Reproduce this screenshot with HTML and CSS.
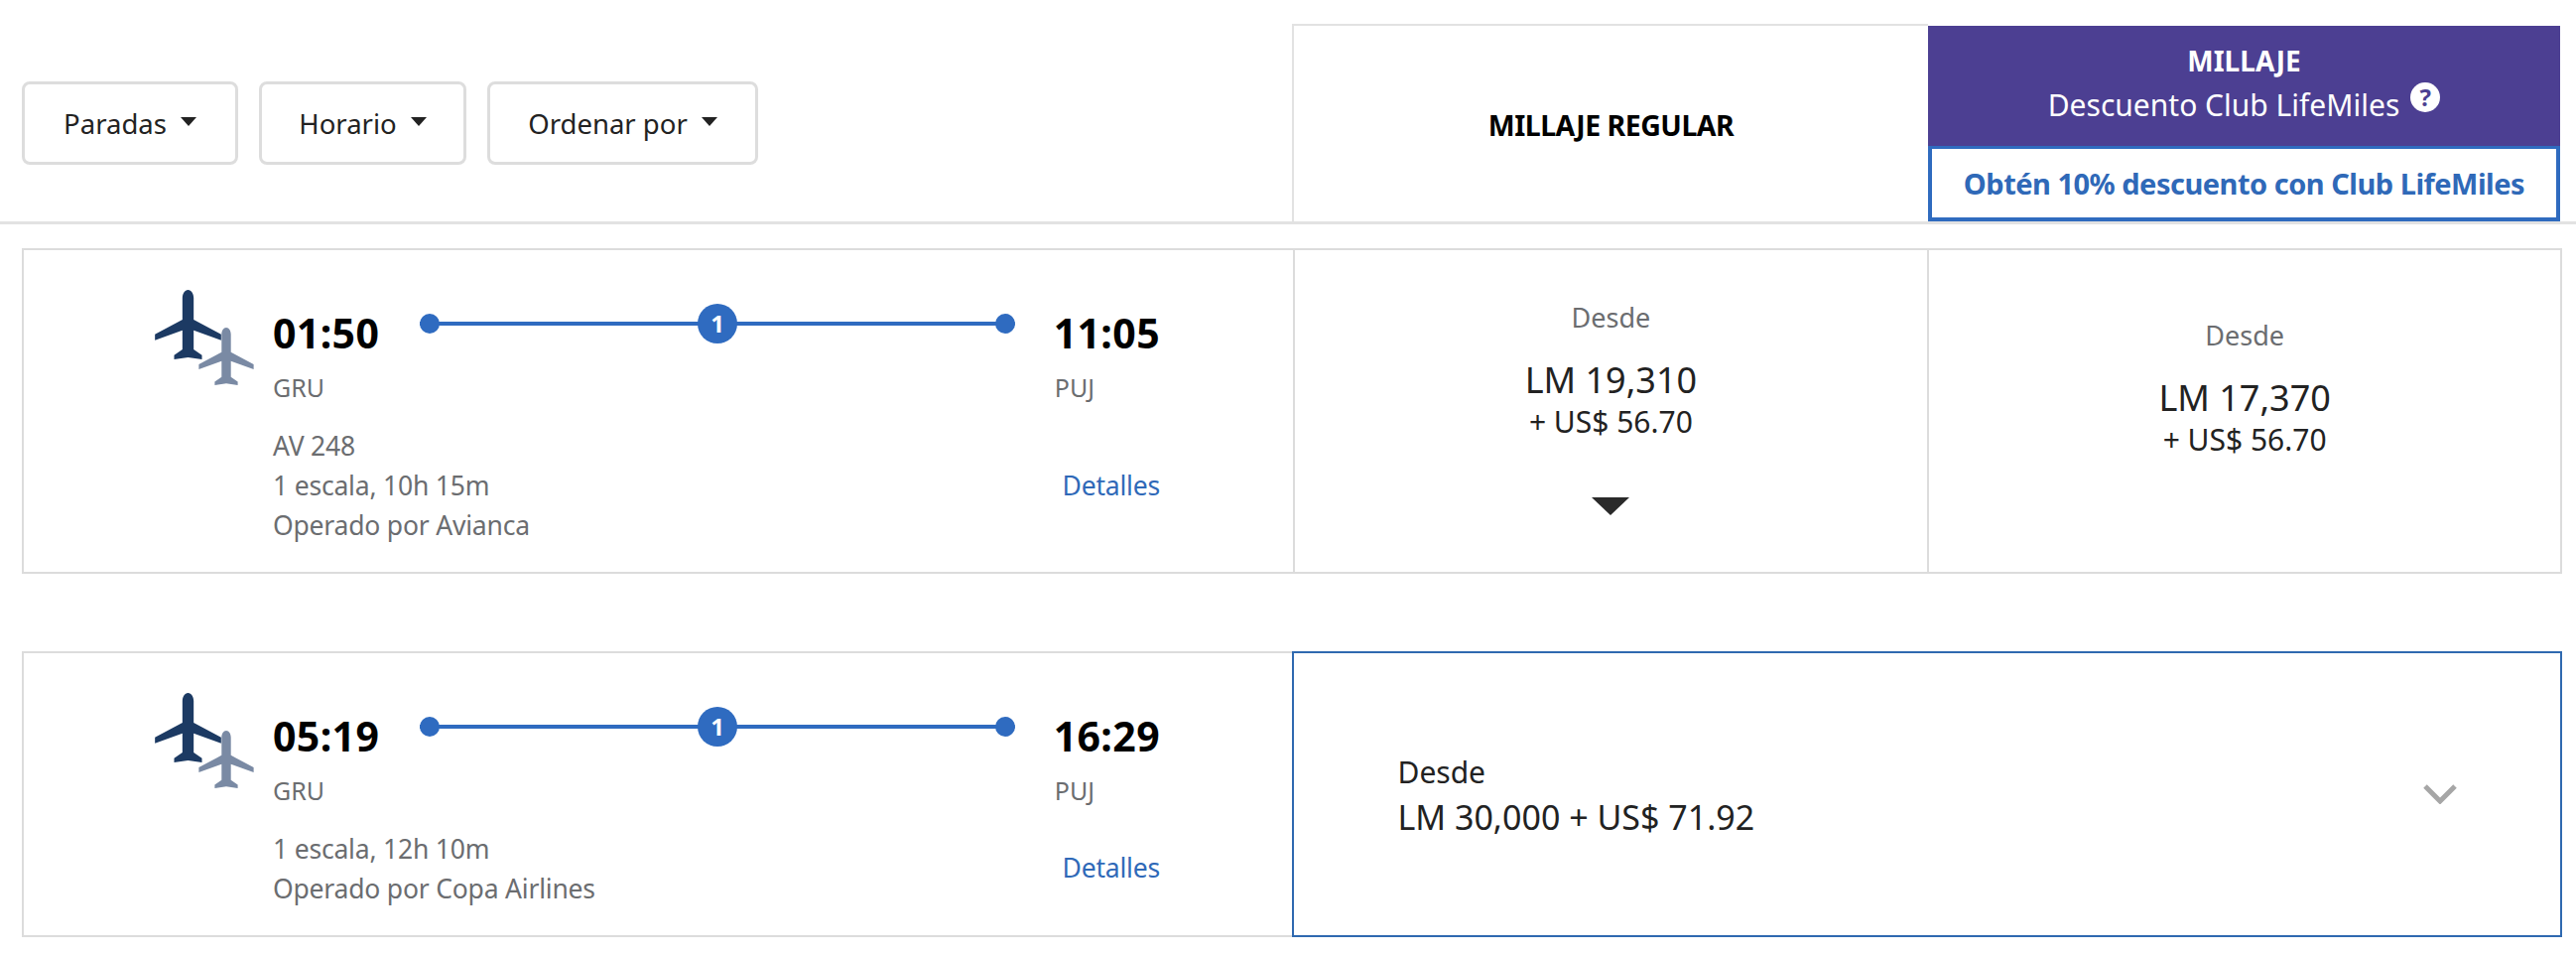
FILE: index.html
```html
<!DOCTYPE html>
<html lang="es">
<head>
<meta charset="utf-8">
<title>Vuelos</title>
<link rel="stylesheet" href="styles.css">
</head>
<body>
<svg class="defs" width="0" height="0" aria-hidden="true">
  <symbol id="plane" viewBox="0 0 200 210">
    <path d="M100 0C110 0 117 12 117 24V90L200 134V152L117 122V180L142 197V210L100 204L58 210V197L83 180V122L0 152V134L83 90V24C83 12 90 0 100 0Z"/>
  </symbol>
</svg>

<header class="top">
  <div class="filters">
    <button class="filter filter-a">Paradas<span class="caret"></span></button>
    <button class="filter filter-b">Horario<span class="caret"></span></button>
    <button class="filter filter-c">Ordenar por<span class="caret"></span></button>
  </div>
  <div class="head-regular">MILLAJE REGULAR</div>
  <div class="head-club">
    <div class="club-title">
      <strong>MILLAJE</strong>
      <span class="club-sub">Descuento Club LifeMiles<span class="help">?</span></span>
    </div>
    <div class="club-cta">Obtén 10% descuento con Club LifeMiles</div>
  </div>
</header>

<main>
  <article class="card card-one">
    <section class="flight">
      <div class="planes">
        <svg class="plane-main"><use href="#plane"/></svg>
        <svg class="plane-second"><use href="#plane"/></svg>
      </div>
      <div class="info">
        <div class="route">
          <span class="time">01:50</span>
          <div class="track"><i class="dot"></i><b class="stops">1</b><i class="dot"></i></div>
          <span class="time">11:05</span>
        </div>
        <div class="airports"><span>GRU</span><span class="dest">PUJ</span></div>
        <div class="meta">
          <div>
            <p>AV 248</p>
            <p>1 escala, 10h 15m</p>
            <p>Operado por Avianca</p>
          </div>
          <a class="details details-one">Detalles</a>
        </div>
      </div>
    </section>
    <section class="fare fare-regular">
      <span class="from">Desde</span>
      <span class="miles">LM 19,310</span>
      <span class="cash">+ US$ 56.70</span>
      <span class="fare-arrow"></span>
    </section>
    <section class="fare fare-club">
      <span class="from">Desde</span>
      <span class="miles">LM 17,370</span>
      <span class="cash">+ US$ 56.70</span>
    </section>
  </article>

  <article class="card card-two">
    <section class="flight">
      <div class="planes">
        <svg class="plane-main"><use href="#plane"/></svg>
        <svg class="plane-second"><use href="#plane"/></svg>
      </div>
      <div class="info">
        <div class="route">
          <span class="time">05:19</span>
          <div class="track"><i class="dot"></i><b class="stops">1</b><i class="dot"></i></div>
          <span class="time">16:29</span>
        </div>
        <div class="airports"><span>GRU</span><span class="dest">PUJ</span></div>
        <div class="meta">
          <div>
            <p>1 escala, 12h 10m</p>
            <p>Operado por Copa Airlines</p>
          </div>
          <a class="details details-two">Detalles</a>
        </div>
      </div>
    </section>
    <section class="fare-wide">
      <div>
        <div class="wide-from">Desde</div>
        <div class="wide-price">LM 30,000 + US$ 71.92</div>
      </div>
      <svg class="chevron" viewBox="0 0 34 20"><path d="M2 2L17 17L32 2"/></svg>
    </section>
  </article>
</main>
</body>
</html>
```

FILE: styles.css
```css
* { box-sizing: border-box; }
html, body { margin: 0; padding: 0; }
body {
  width: 2596px;
  height: 964px;
  background: #fff;
  color: #222;
  font-family: "Noto Sans", "Open Sans", sans-serif;
  overflow: hidden;
}
.defs { position: absolute; }
p { margin: 0; }

/* header */
.top {
  display: flex;
  height: 226px;
  padding-top: 24px;
  border-bottom: 3px solid #e2e2e2;
}
.filters {
  width: 1302px;
  display: flex;
  align-items: flex-start;
  gap: 21px;
  padding: 58px 0 0 22px;
}
.filter {
  height: 84px;
  display: flex;
  align-items: center;
  justify-content: center;
  background: #fff;
  border: 3px solid #ddd;
  border-radius: 8px;
  color: #222;
  font: 400 27.5px "Noto Sans", sans-serif;
  padding: 0;
}
.filter-a { width: 218px; }
.filter-b { width: 209px; }
.filter-c { width: 273px; }
.caret {
  width: 0;
  height: 0;
  margin: 0 0 3px 14px;
  border-left: 8px solid transparent;
  border-right: 8px solid transparent;
  border-top: 9px solid #222;
}
.head-regular {
  width: 641px;
  height: 199px;
  display: flex;
  align-items: center;
  justify-content: center;
  padding-top: 3px;
  border: solid #e2e2e2;
  border-width: 2px 0 0 2px;
  color: #000;
  font-size: 28.5px;
  font-weight: 700;
  letter-spacing: -0.5px;
}
.head-club {
  width: 637px;
  height: 197px;
  margin-top: 2px;
  display: flex;
  flex-direction: column;
}
.club-title {
  height: 121px;
  background: #4c3f92;
  color: #fff;
  display: flex;
  flex-direction: column;
  align-items: center;
  padding-top: 15px;
  font-size: 30px;
}
.club-title strong { font-size: 28px; line-height: 40px; }
.club-sub { margin-top: 2px; line-height: 46px; display: flex; align-items: flex-start; }
.help {
  width: 30px;
  height: 30px;
  margin: 0 0 0 11px;
  border-radius: 50%;
  background: #fff;
  color: #4c3f92;
  font-size: 24px;
  font-weight: 700;
  line-height: 30px;
  text-align: center;
}
.club-cta {
  flex: 1;
  display: flex;
  align-items: center;
  justify-content: center;
  border: 3px solid #2f6bbf;
  border-width: 3px 4px 4px 4px;
  color: #2f69b8;
  font-size: 29px;
  font-weight: 700;
  letter-spacing: -0.5px;
}

/* cards */
.card {
  display: flex;
  margin-left: 22px;
  width: 2560px;
  border: 2px solid #dcdcdc;
}
.card-one { height: 328px; margin-top: 24px; }
.card-two { height: 288px; margin-top: 78px; }

.flight {
  width: 1279px;
  display: flex;
  padding: 0 0 0 132px;
}
.planes { position: relative; width: 119px; height: 100px; margin-top: 40px; }
.plane-main { width: 67px; height: 70px; display: block; fill: #1c3a63; }
.plane-second {
  position: absolute;
  left: 44px;
  top: 38px;
  width: 56px;
  height: 58px;
  fill: #7a8aa4;
}
.info { width: 894px; padding-top: 55px; }
.route { display: flex; align-items: flex-start; height: 65px; }
.time {
  color: #000;
  font-size: 41px;
  font-weight: 700;
  line-height: 56px;
  letter-spacing: 0.4px;
}
.track {
  flex: 1;
  display: flex;
  align-items: center;
  justify-content: space-between;
  height: 40px;
  margin: -1px 39px 0 41px;
  background: linear-gradient(#2f6bc0, #2f6bc0) center / 100% 4px no-repeat;
}
.dot { width: 20px; height: 20px; border-radius: 50%; background: #2f6bc0; }
.stops {
  width: 40px;
  height: 40px;
  border-radius: 50%;
  background: #2f6bc0;
  color: #fff;
  font-size: 24px;
  line-height: 40px;
  text-align: center;
}
.airports {
  display: flex;
  justify-content: space-between;
  margin-top: 2px;
  color: #6b6d70;
  font-size: 25px;
  line-height: 32px;
}
.dest { margin-right: 66px; }
.meta {
  display: flex;
  justify-content: space-between;
  align-items: flex-end;
  margin-top: 23px;
  color: #6b6d70;
  font-size: 26.5px;
  letter-spacing: -0.2px;
  line-height: 40px;
}
.details { color: #2f69b8; line-height: 40px; }
.details-one { margin-bottom: 40px; }
.details-two { margin-bottom: 21px; }

.fare {
  display: flex;
  flex-direction: column;
  align-items: center;
  border-left: 2px solid #dcdcdc;
}
.fare-regular { width: 640px; padding-top: 50px; }
.fare-club { width: 638px; padding-top: 68px; }
.from { color: #6b6d70; font-size: 27px; line-height: 36px; }
.miles { margin-top: 25px; font-size: 36px; line-height: 40px; }
.cash { margin-top: 2px; font-size: 30px; line-height: 40px; }
.fare-arrow {
  margin-top: 56px;
  width: 0;
  height: 0;
  border-left: 19px solid transparent;
  border-right: 19px solid transparent;
  border-top: 18px solid #2a2a2a;
}
.fare-wide {
  width: 1280px;
  margin: -2px -2px -2px 0;
  display: flex;
  align-items: center;
  justify-content: space-between;
  padding: 0 104px 0 104px;
  border: 2px solid #2f69b0;
}
.wide-from { font-size: 30px; line-height: 40px; }
.wide-price { margin-top: 5px; font-size: 34px; line-height: 40px; }
.chevron { width: 34px; height: 20px; fill: none; stroke: #a6a6a6; stroke-width: 5px; }
```
